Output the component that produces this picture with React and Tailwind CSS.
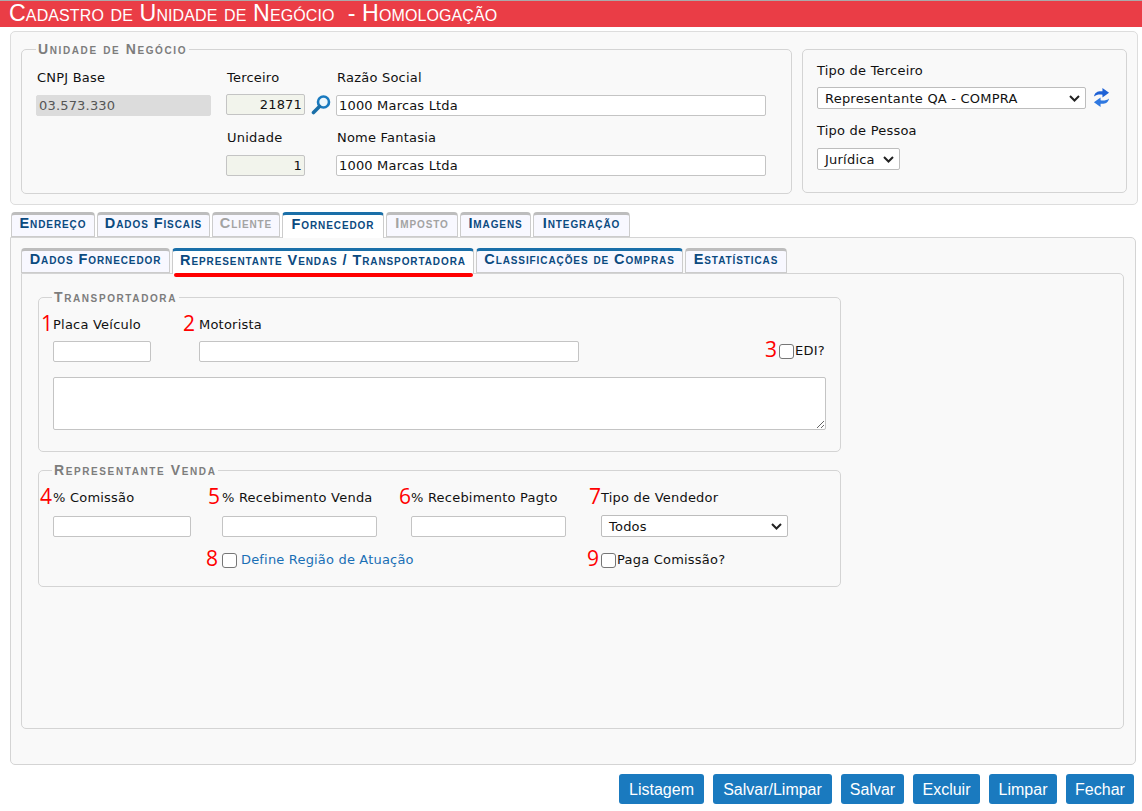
const sans = "font-['DejaVu_Sans',Verdana,sans-serif]";

function Num({ n, className = "" }) {
  return <span className={`absolute bottom-[-3px] font-['Open_Sans',sans-serif] text-[21px] leading-[26px] tracking-normal text-[#f00] ${className}`}>{n}</span>;
}

function Label({ children, className = "" }) {
  return <div className={`relative text-[13px] leading-4 tracking-[0.22px] text-[#111] ${className}`}>{children}</div>;
}

function Input({ className = "", value = "", right = false, bg = "bg-white" }) {
  return (
    <input
      readOnly
      value={value}
      className={`block h-[21px] rounded-[2px] border border-[#c4c4c4] px-[2px] text-[13px] tracking-[0.18px] text-[#111] outline-none ${bg} ${right ? "text-right" : ""} ${className}`}
    />
  );
}

function Tab({ children, active, blue, disabled, className = "" }) {
  return (
    <div
      className={`mr-[2px] flex items-center rounded-t-[4px] border-x border-t-[3px] border-x-[#ccc] pb-[3px] font-['Liberation_Sans',sans-serif] text-[14.5px] font-bold tracking-[0.9px] whitespace-nowrap [font-variant:small-caps] ${
        active || blue ? "border-t-[#1a6fa8]" : "border-t-[#bdbdbd]"
      } ${active ? "relative z-10 -mb-px bg-white" : "border-b border-b-[#ccc] bg-[#f8f8ff]"} ${
        disabled ? "text-[#a3a3a3]" : "text-[#0b4a80]"
      } ${className}`}
    >
      {children}
    </div>
  );
}

function Legend({ children, className = "" }) {
  return (
    <legend className={`px-[2px] font-['Liberation_Sans',sans-serif] text-[14px] leading-[14px] font-bold tracking-[1.6px] text-[#7d7d7d] [font-variant:small-caps] ${className}`}>
      {children}
    </legend>
  );
}

function Check({ className = "" }) {
  return <span className={`block h-[15px] w-[15px] shrink-0 rounded-[3px] border border-[#767676] bg-white ${className}`} />;
}

function Chevron() {
  return (
    <svg width="11" height="7" viewBox="0 0 11 7" fill="none" className="shrink-0">
      <path d="M1 1l4.500 4.500L10 1" stroke="#222" strokeWidth="2" />
    </svg>
  );
}

function Select({ children, className = "" }) {
  return (
    <div className={`flex items-center justify-between rounded-[2px] border border-[#bdbdbd] bg-white pt-px pr-[5px] pl-[7px] text-[13px] tracking-[0.22px] text-[#111] ${className}`}>
      <span>{children}</span>
      <Chevron />
    </div>
  );
}

function Btn({ children, className = "" }) {
  return (
    <div className={`flex h-[30px] items-center justify-center rounded-[3px] bg-[#1a7abf] pt-px font-['Liberation_Sans',sans-serif] text-[16px] text-white ${className}`}>
      {children}
    </div>
  );
}

export default function App() {
  return (
    <div className={`h-[811px] w-[1142px] overflow-hidden bg-white ${sans}`}>
      <div className="h-[27px] border-t border-[#aaa] bg-[#ea3d46] pl-[9px] font-['Liberation_Sans',sans-serif] text-[23.2px] leading-[24px] tracking-[0.11px] whitespace-pre text-white [font-variant:small-caps]">
        Cadastro de Unidade de Negócio  - Homologação
      </div>

      <div className="mt-[4px] ml-[10px] flex h-[174px] w-[1128px] gap-[10px] rounded-[5px] border border-[#ddd] bg-[#f9f9f9] pl-[10px]">
        <fieldset className="mt-[10px] h-[152px] w-[771px] rounded-[5px] border border-[#d4d4d4] pl-[14px]">
          <Legend className="ml-0">Unidade de Negócio</Legend>
          <div className="mt-[14px] flex">
            <div className="w-[190px]">
              <Label className="pl-px">CNPJ Base</Label>
              <Input value="03.573.330" bg="bg-[#dcdcdc]" className="mt-[9px] w-[175px] border-[#dcdcdc] text-[#555]" />
            </div>
            <div className="w-[110px]">
              <Label className="pl-px">Terceiro</Label>
              <div className="mt-[8px] flex items-center">
                <Input value="21871" right bg="bg-[#f2f4ec]" className="w-[79px]" />
                <svg width="20" height="21" viewBox="0 0 20 21" className="ml-[6px] shrink-0">
                  <circle cx="12.500" cy="8" r="5.500" fill="#eef7fc" stroke="#1a7abf" strokeWidth="2.600" />
                  <path d="M8.500 12.500L2.500 18.500" stroke="#1a6fa8" strokeWidth="3.600" strokeLinecap="round" />
                </svg>
              </div>
              <Label className="mt-[15px] pl-px">Unidade</Label>
              <Input value="1" right bg="bg-[#f2f4ec]" className="mt-[9px] w-[79px]" />
            </div>
            <div className="w-[430px]">
              <Label className="pl-px">Razão Social</Label>
              <Input value="1000 Marcas Ltda" className="mt-[9px] w-[430px]" />
              <Label className="mt-[14px] pl-px">Nome Fantasia</Label>
              <Input value="1000 Marcas Ltda" className="mt-[9px] w-[430px]" />
            </div>
          </div>
        </fieldset>

        <div className="mt-[17px] h-[144px] w-[325px] rounded-[5px] border border-[#d4d4d4] pt-[13px] pl-[14px]">
          <Label>Tipo de Terceiro</Label>
          <div className="mt-[8px] flex items-center">
            <Select className="h-[22px] w-[269px]">Representante QA - COMPRA</Select>
            <svg width="17" height="21" viewBox="0 0 18 22" className="mb-[1px] ml-[7px] shrink-0">
              <path d="M1 10C2 5 6 4 10 4.500L10 1L17 6L10 11L10 8C7 7.500 3 8 1 10Z" fill="#1f62d6" />
              <path d="M17 12C16 17 12 18 8 17.500L8 21L1 16L8 11L8 14C11 14.500 15 14 17 12Z" fill="#2f78e0" />
            </svg>
          </div>
          <Label className="mt-[14px]">Tipo de Pessoa</Label>
          <Select className="mt-[9px] h-[22px] w-[83px]">Jurídica</Select>
        </div>
      </div>

      <div className="mt-[7px] ml-[11px] flex h-[25px]">
        <Tab className="w-[84px] justify-center">Endereço</Tab>
        <Tab className="w-[113px] justify-center">Dados Fiscais</Tab>
        <Tab disabled className="w-[68px] justify-center">Cliente</Tab>
        <Tab active className="w-[102px] justify-center">Fornecedor</Tab>
        <Tab disabled className="w-[72px] justify-center">Imposto</Tab>
        <Tab className="w-[71px] justify-center">Imagens</Tab>
        <Tab className="w-[97px] justify-center">Integração</Tab>
      </div>

      <div className="ml-[10px] h-[528px] w-[1126px] rounded-[5px] rounded-tl-none border border-[#d4d4d4] bg-[#f9f9f9] pt-[10px] pl-[10px]">
        <div className="flex h-[25px]">
          <Tab className="w-[149px] justify-center">Dados Fornecedor</Tab>
          <Tab active className="w-[302px] justify-center">Representante Vendas / Transportadora</Tab>
          <Tab blue className="w-[207px] justify-center">Classificações de Compras</Tab>
          <Tab className="w-[102px] justify-center">Estatísticas</Tab>
        </div>

        <div className="relative h-[456px] w-[1103px] rounded-[5px] rounded-tl-none border border-[#d4d4d4] bg-[#f9f9f9] pl-[16px]">
          <div className="absolute top-[-1px] left-[152px] z-20 h-[4px] w-[299px] rounded-full bg-[#f00]" />

          <fieldset className="mt-[16px] h-[162px] w-[803px] rounded-[5px] border border-[#d4d4d4] pl-[14px]">
            <Legend className="ml-[-1px]">Transportadora</Legend>
            <div className="mt-[13px] flex">
              <div className="w-[146px]">
                <Label className="w-fit">
                  <Num n="1" className="right-full" />
                  Placa Veículo
                </Label>
                <Input className="mt-[8px] w-[98px]" />
              </div>
              <div className="w-[580px]">
                <Label className="w-fit">
                  <Num n="2" className="right-[calc(100%+4px)]" />
                  Motorista
                </Label>
                <Input className="mt-[8px] w-[380px]" />
              </div>
              <div className="relative mt-[26px] flex h-[16px] items-center gap-px text-[13px] tracking-[0.22px] text-[#111]">
                <Num n="3" className="right-full mr-[2px]" />
                <Check />
                EDI?
              </div>
            </div>
            <textarea readOnly className="mt-[15px] block h-[53px] w-[773px] rounded-[2px] border border-[#c4c4c4] bg-white outline-none" />
          </fieldset>

          <fieldset className="mt-[11px] h-[124px] w-[803px] rounded-[5px] border border-[#d4d4d4] pl-[14px]">
            <Legend className="ml-[-1px]">Representante Venda</Legend>
            <div className="mt-[13px] flex">
              <div className="w-[169px]">
                <Label className="w-fit">
                  <Num n="4" className="right-full mr-[1px]" />
                  % Comissão
                </Label>
                <Input className="mt-[10px] w-[138px]" />
              </div>
              <div className="w-[189px]">
                <Label className="w-fit">
                  <Num n="5" className="right-[calc(100%+2px)]" />
                  % Recebimento Venda
                </Label>
                <Input className="mt-[10px] w-[155px]" />
                <div className="relative mt-[15px] flex h-[16px] w-fit items-center gap-[4px] text-[13px] tracking-[0.18px] whitespace-nowrap text-[#1a6fb5]">
                  <Num n="8" className="right-full mr-[4px]" />
                  <Check />
                  Define Região de Atuação
                </div>
              </div>
              <div className="w-[190px]">
                <Label className="w-fit">
                  <Num n="6" className="right-full" />
                  % Recebimento Pagto
                </Label>
                <Input className="mt-[10px] w-[155px]" />
              </div>
              <div>
                <Label className="w-fit">
                  <Num n="7" className="right-full" />
                  Tipo de Vendedor
                </Label>
                <Select className="mt-[9px] h-[22px] w-[187px]">Todos</Select>
                <div className="relative mt-[15px] flex h-[16px] w-fit items-center gap-px text-[13px] tracking-[0.22px] text-[#111]">
                  <Num n="9" className="right-full mr-[2px]" />
                  <Check />
                  Paga Comissão?
                </div>
              </div>
            </div>
          </fieldset>
        </div>
      </div>

      <div className="mt-[9px] flex w-[1134px] justify-end gap-[9px]">
        <Btn className="w-[85px]">Listagem</Btn>
        <Btn className="w-[119px]">Salvar/Limpar</Btn>
        <Btn className="w-[63px]">Salvar</Btn>
        <Btn className="w-[67px]">Excluir</Btn>
        <Btn className="w-[68px]">Limpar</Btn>
        <Btn className="w-[68px]">Fechar</Btn>
      </div>
    </div>
  );
}
